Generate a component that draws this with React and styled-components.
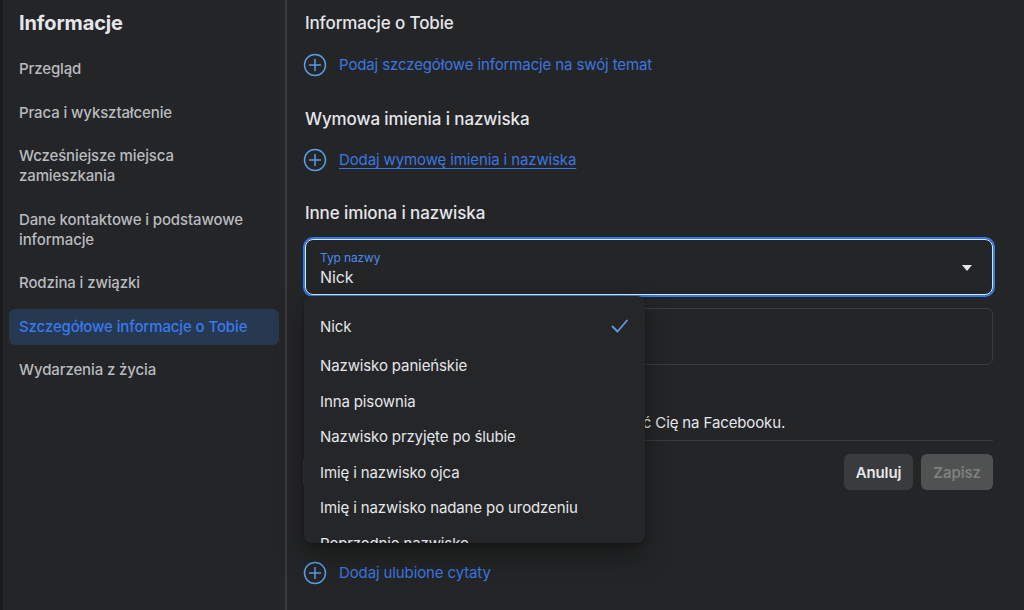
import React from 'react';
import styled, { createGlobalStyle } from 'styled-components';

const sidebarItems = [
  'Przegląd',
  'Praca i wykształcenie',
  'Wcześniejsze miejsca zamieszkania',
  'Dane kontaktowe i podstawowe informacje',
  'Rodzina i związki',
  'Szczegółowe informacje o Tobie',
  'Wydarzenia z życia',
];

const nameTypes = [
  'Nick',
  'Nazwisko panieńskie',
  'Inna pisownia',
  'Nazwisko przyjęte po ślubie',
  'Imię i nazwisko ojca',
  'Imię i nazwisko nadane po urodzeniu',
  'Poprzednie nazwisko',
];

const PlusCircle = () => (
  <svg width="24" height="24" viewBox="0 0 24 24" fill="none">
    <circle cx="12" cy="12" r="10.5" stroke="#5b9be8" strokeWidth="1.5" />
    <path d="M12 6.5v11M6.5 12h11" stroke="#5b9be8" strokeWidth="1.5" strokeLinecap="round" />
  </svg>
);

const Check = () => (
  <svg width="20" height="20" viewBox="0 0 20 20" fill="none">
    <path d="M2.5 10.5l5 5L17 4.5" stroke="#5c9ce6" strokeWidth="1.8" strokeLinecap="round" strokeLinejoin="round" />
  </svg>
);

const Globe = () => (
  <svg width="16" height="16" viewBox="0 0 16 16" fill="none">
    <circle cx="8" cy="8" r="6.5" stroke="#e4e6eb" strokeWidth="1.3" />
    <path d="M1.5 8h13M8 1.5c2 2 2 11 0 13M8 1.5c-2 2-2 11 0 13" stroke="#e4e6eb" strokeWidth="1.1" />
  </svg>
);

function AddRow({ children, underline }) {
  return (
    <AddLink>
      <PlusCircle />
      <AddText $underline={underline}>{children}</AddText>
    </AddLink>
  );
}

export default function App() {
  return (
    <>
      <GlobalStyle />
      <Page>
        <Sidebar>
          <SideTitle>Informacje</SideTitle>
          <SideList>
            {sidebarItems.map(item => (
              <SideItem key={item} $active={item === 'Szczegółowe informacje o Tobie'}>
                {item}
              </SideItem>
            ))}
          </SideList>
        </Sidebar>
        <Main>
          <SectionTitle>Informacje o Tobie</SectionTitle>
          <Spacer $h={21} />
          <AddRow>Podaj szczegółowe informacje na swój temat</AddRow>
          <Spacer $h={33} />
          <SectionTitle>Wymowa imienia i nazwiska</SectionTitle>
          <Spacer $h={20} />
          <AddRow underline>Dodaj wymowę imienia i nazwiska</AddRow>
          <Spacer $h={32} />
          <SectionTitle>Inne imiona i nazwiska</SectionTitle>
          <Spacer $h={16} />
          <SelectWrap>
            <SelectBox>
              <SelectLabel>Typ nazwy</SelectLabel>
              <SelectValue>Nick</SelectValue>
              <Caret />
            </SelectBox>
            <Menu>
              {nameTypes.map((t, i) => (
                <MenuItem key={t} $first={i === 0}>
                  {t}
                  {i === 0 && <Check />}
                </MenuItem>
              ))}
            </Menu>
          </SelectWrap>
          <Spacer $h={13} />
          <TextInput />
          <Spacer $h={48} />
          <Note>Inne nazwiska pomagają innym osobom znaleźć Cię na Facebooku.</Note>
          <Spacer $h={7} />
          <Divider />
          <Spacer $h={13} />
          <ActionBar>
            <PrivacyButton>
              <Globe />
            </PrivacyButton>
            <Buttons>
              <Button>Anuluj</Button>
              <Button $disabled>Zapisz</Button>
            </Buttons>
          </ActionBar>
          <Spacer $h={72} />
          <AddRow>Dodaj ulubione cytaty</AddRow>
        </Main>
      </Page>
    </>
  );
}

const GlobalStyle = createGlobalStyle`
  html, body {
    margin: 0;
    padding: 0;
    background: #242526;
    height: 100%;
    overflow: hidden;
  }
  body {
    font-family: Inter, "Noto Sans", sans-serif;
    color: #e4e6eb;
    letter-spacing: -0.12px;
  }
  * { box-sizing: border-box; }
`;

const Page = styled.div`
  display: flex;
  height: 610px;
  width: 1024px;
  background: #242526;
  border-left: 3px solid #1b1c1d;
`;

const Sidebar = styled.aside`
  width: 284px;
  flex-shrink: 0;
  padding: 10px 6px 0 6px;
  border-right: 2px solid #393a3b;
`;

const SideTitle = styled.h1`
  margin: 0;
  padding: 0 10px;
  font-size: 20px;
  line-height: 26px;
  font-weight: 700;
  color: #e4e6eb;
`;

const SideList = styled.ul`
  list-style: none;
  margin: 15px 0 0;
  padding: 0;
  display: flex;
  flex-direction: column;
  gap: 7.5px;
`;

const SideItem = styled.li`
  padding: 8px 10px;
  border-radius: 6px;
  font-size: 15px;
  line-height: 20px;
  font-weight: 500;
  color: ${p => (p.$active ? '#3a78ee' : '#b8bbbf')};
  background: ${p => (p.$active ? '#263951' : 'transparent')};
`;

const Main = styled.main`
  flex: 1;
  padding: 13px 31px 0 18px;
  display: flex;
  flex-direction: column;
`;

const Spacer = styled.div`
  height: ${p => p.$h}px;
  flex-shrink: 0;
`;

const SectionTitle = styled.h2`
  margin: 0;
  font-size: 17px;
  line-height: 20px;
  font-weight: 500;
  color: #e4e6eb;
`;

const AddLink = styled.div`
  display: flex;
  align-items: center;
  gap: 12px;
  height: 22px;
  margin-left: -2px;
`;

const AddText = styled.span`
  font-size: 15px;
  line-height: 20px;
  color: #3d76e2;
  text-decoration: ${p => (p.$underline ? 'underline' : 'none')};
  text-underline-offset: 3px;
`;

const SelectWrap = styled.div`
  position: relative;
`;

const SelectBox = styled.div`
  position: relative;
  height: 56px;
  border: 1.5px solid #e4e6eb;
  border-radius: 8px;
  box-shadow: 0 0 0 2px #2d7cf6;
  padding: 10px 14px 0;
`;

const SelectLabel = styled.div`
  font-size: 12px;
  line-height: 16px;
  color: #4a8af0;
`;

const SelectValue = styled.div`
  font-size: 16px;
  line-height: 22px;
  color: #e4e6eb;
`;

const Caret = styled.span`
  position: absolute;
  right: 20px;
  top: 25px;
  width: 0;
  height: 0;
  border-left: 5px solid transparent;
  border-right: 5px solid transparent;
  border-top: 6px solid #e4e6eb;
`;

const Menu = styled.ul`
  position: absolute;
  z-index: 5;
  top: 57px;
  left: -1px;
  width: 341px;
  height: 247px;
  margin: 0;
  padding: 8px 0 0;
  list-style: none;
  overflow: hidden;
  background: #252628;
  border-radius: 8px;
  box-shadow: 0 12px 28px 0 rgba(0, 0, 0, 0.35), 0 2px 4px 0 rgba(0, 0, 0, 0.2);
`;

const MenuItem = styled.li`
  display: flex;
  align-items: center;
  justify-content: space-between;
  height: ${p => (p.$first ? '44px' : '35.5px')};
  padding: 0 15px 0 16px;
  font-size: 15px;
  color: #e4e6eb;
  flex-shrink: 0;
`;

const TextInput = styled.div`
  height: 57px;
  border: 1px solid #3a3b3d;
  border-radius: 6px;
`;

const Note = styled.p`
  margin: 0;
  padding-left: 10px;
  font-size: 15px;
  line-height: 20px;
  color: #e4e6eb;
  white-space: nowrap;
`;

const Divider = styled.hr`
  margin: 0;
  border: 0;
  height: 1px;
  background: #3a3b3c;
`;

const ActionBar = styled.div`
  display: flex;
  justify-content: space-between;
  align-items: center;
`;

const PrivacyButton = styled.div`
  height: 34px;
  width: 120px;
  padding: 0 12px;
  display: flex;
  align-items: center;
  border-radius: 6px;
  background: #3a3b3c;
  margin-left: -2px;
`;

const Buttons = styled.div`
  display: flex;
  gap: 8px;
`;

const Button = styled.button`
  height: 36px;
  padding: 0 12px;
  border: 0;
  border-radius: 6px;
  font-family: inherit;
  font-size: 15px;
  font-weight: 600;
  letter-spacing: -0.12px;
  background: ${p => (p.$disabled ? '#505151' : '#3a3b3c')};
  color: ${p => (p.$disabled ? '#7e8081' : '#e4e6eb')};
`;
